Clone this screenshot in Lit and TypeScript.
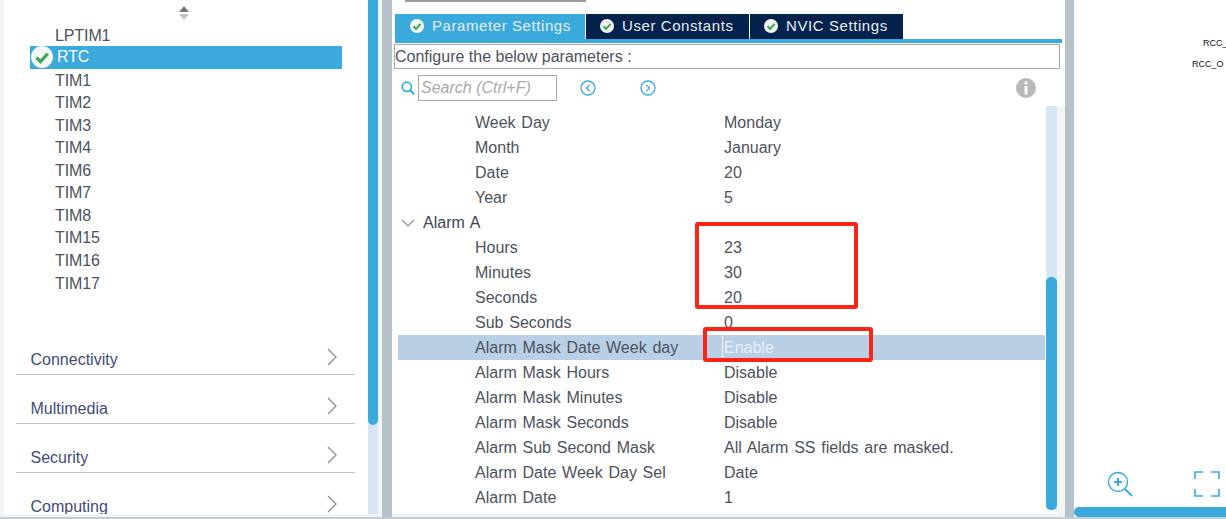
import { LitElement, css, html, svg } from 'lit';
import { customElement } from 'lit/decorators.js';

const PERIPHERALS = ['TIM1', 'TIM2', 'TIM3', 'TIM4', 'TIM6', 'TIM7', 'TIM8', 'TIM15', 'TIM16', 'TIM17'];
const CATEGORIES = ['Connectivity', 'Multimedia', 'Security', 'Computing'];

type Param = { label: string; value?: string; group?: boolean; selected?: boolean };

const PARAMS: Param[] = [
  { label: 'Week Day', value: 'Monday' },
  { label: 'Month', value: 'January' },
  { label: 'Date', value: '20' },
  { label: 'Year', value: '5' },
  { label: 'Alarm A', group: true },
  { label: 'Hours', value: '23' },
  { label: 'Minutes', value: '30' },
  { label: 'Seconds', value: '20' },
  { label: 'Sub Seconds', value: '0' },
  { label: 'Alarm Mask Date Week day', value: 'Enable', selected: true },
  { label: 'Alarm Mask Hours', value: 'Disable' },
  { label: 'Alarm Mask Minutes', value: 'Disable' },
  { label: 'Alarm Mask Seconds', value: 'Disable' },
  { label: 'Alarm Sub Second Mask', value: 'All Alarm SS fields are masked.' },
  { label: 'Alarm Date Week Day Sel', value: 'Date' },
  { label: 'Alarm Date', value: '1' },
];

const TABS = ['Parameter Settings', 'User Constants', 'NVIC Settings'];

const check = (size: number, color: string) => html`<svg width=${size} height=${size} viewBox="0 0 20 20">
  <circle cx="10" cy="10" r="10" fill="#f4f8f5"></circle>
  <path d="M5 10.5l3.6 3.6L15.2 7" fill="none" stroke=${color} stroke-width="3"></path>
</svg>`;

const chevronRight = svg`<path d="M1 1l8 8-8 8" fill="none" stroke="#8a8d92" stroke-width="1.3"></path>`;

@customElement('app-root')
export class AppRoot extends LitElement {
  render() {
    return html`<div class="page">
      <aside class="left">
        <div class="left-content">
          <div class="sort">
            <svg width="12" height="14" viewBox="0 0 12 14">
              <path d="M6 0l5 6H1z" fill="#777"></path>
              <path d="M1 8h10l-5 6z" fill="#c4c4c4"></path>
            </svg>
          </div>
          <div class="list">
            <div class="item">LPTIM1</div>
            <div class="item active"><span class="active-icon">${check(22, '#3fa75c')}</span>RTC</div>
            ${PERIPHERALS.map((name) => html`<div class="item">${name}</div>`)}
          </div>
          <div class="categories">
            ${CATEGORIES.map(
              (name) => html`<div class="category">
                <span>${name}</span>
                <svg width="10" height="18" viewBox="0 0 10 18">${chevronRight}</svg>
              </div>`,
            )}
          </div>
        </div>
        <div class="vbar left-bar"><div class="thumb"></div></div>
      </aside>
      <div class="divider"></div>
      <main class="middle">
        <div class="top-tick"></div>
        <div class="tabs">
          ${TABS.map(
            (name, i) => html`<div class="tab tab-${i} ${i === 0 ? 'on' : ''}">
              ${check(14, '#3fa75c')}<span>${name}</span>
            </div>`,
          )}
        </div>
        <div class="tab-line"></div>
        <div class="config">Configure the below parameters :</div>
        <div class="search-row">
          <svg class="search-icon" width="14" height="14" viewBox="0 0 14 14">
            <circle cx="5.8" cy="5.8" r="4.6" fill="none" stroke="#3aa9dc" stroke-width="1.7"></circle>
            <path d="M9.2 9.2l4 4" stroke="#3aa9dc" stroke-width="2"></path>
          </svg>
          <div class="search">Search (Ctrl+F)</div>
          <svg class="nav prev" width="16" height="16" viewBox="0 0 16 16">
            <circle cx="8" cy="8" r="7" fill="none" stroke="#3aa9dc" stroke-width="1.3"></circle>
            <path d="M9.5 5L6.5 8l3 3" fill="none" stroke="#3aa9dc" stroke-width="1.3"></path>
          </svg>
          <svg class="nav next" width="16" height="16" viewBox="0 0 16 16">
            <circle cx="8" cy="8" r="7" fill="none" stroke="#3aa9dc" stroke-width="1.3"></circle>
            <path d="M6.5 5l3 3-3 3" fill="none" stroke="#3aa9dc" stroke-width="1.3"></path>
          </svg>
          <svg class="info" width="20" height="20" viewBox="0 0 20 20">
            <circle cx="10" cy="10" r="10" fill="#b9b9b9"></circle>
            <rect x="8.6" y="3.5" width="2.8" height="2.8" fill="#fff"></rect>
            <rect x="8.6" y="8" width="2.8" height="8.5" fill="#fff"></rect>
          </svg>
        </div>
        <div class="tree-wrap">
          <div class="tree">
            ${PARAMS.map((p) =>
              p.group
                ? html`<div class="row group">
                    <svg width="14" height="8" viewBox="0 0 14 8">
                      <path d="M1 1l6 6 6-6" fill="none" stroke="#8a8d92" stroke-width="1.2"></path>
                    </svg>
                    <span>${p.label}</span>
                  </div>`
                : html`<div class="row ${p.selected ? 'selected' : ''}">
                    <span class="label">${p.label}</span>
                    <span class="value">${p.value}</span>
                  </div>`,
            )}
          </div>
          <div class="vbar tree-bar"><div class="thumb"></div></div>
          <div class="gutter"></div>
        </div>
      </main>
      <div class="divider right-divider"></div>
      <section class="right">
        <div class="pins">
          <div class="pin first">RCC_</div>
          <div class="pin">RCC_O</div>
        </div>
        <div class="tools">
          <svg width="26" height="26" viewBox="0 0 26 26">
            <circle cx="11" cy="11" r="9.5" fill="none" stroke="#3aa9dc" stroke-width="1.4"></circle>
            <path d="M7 11h8M11 7v8" stroke="#3aa9dc" stroke-width="2"></path>
            <path d="M18 18l7 7" stroke="#3aa9dc" stroke-width="1.8"></path>
          </svg>
          <svg width="26" height="26" viewBox="0 0 26 26">
            <path d="M1 8V1h8M17 1h8v7M25 18v7h-8M9 25H1v-7" fill="none" stroke="#3aa9dc" stroke-width="1.6"></path>
          </svg>
        </div>
        <div class="hbar"></div>
      </section>
      <div class="mark mark-values"></div>
      <div class="mark mark-enable"></div>
    </div>`;
  }

  static styles = css`
    :host {
      display: block;
      font-family: 'Liberation Sans', Arial, sans-serif;
      font-size: 16px;
      color: #4d525c;
    }
    .page {
      position: relative;
      display: flex;
      width: 1226px;
      height: 519px;
      overflow: hidden;
      background: #fff;
      box-sizing: border-box;
      border-bottom: 2px solid #c5cdd2;
    }
    .left {
      width: 382px;
      flex: none;
      display: flex;
      background: #f3f5f5;
      padding-left: 4px;
      box-sizing: border-box;
    }
    .left-content {
      width: 364px;
      height: 514px;
      background: #fff;
      overflow: hidden;
    }
    .sort {
      height: 23.5px;
      padding: 6px 0 0 174px;
      box-sizing: border-box;
    }
    .list {
      padding-left: 26px;
    }
    .item {
      height: 22.55px;
      line-height: 24.5px;
      padding-left: 25px;
      width: 287px;
      letter-spacing: -0.1px;
    }
    .item.active {
      display: flex;
      align-items: center;
      background: #3aa9dc;
      color: #fff;
      padding-left: 1px;
      width: 311px;
    }
    .active-icon {
      display: flex;
      width: 26px;
    }
    .categories {
      margin-top: 31.5px;
      padding-left: 12px;
      width: 339px;
    }
    .category {
      height: 49px;
      box-sizing: border-box;
      border-bottom: 1px solid #b6c2ca;
      display: flex;
      justify-content: space-between;
      align-items: flex-end;
      padding: 0 18px 5px 14.5px;
      color: #3f4b78;
    }
    .category svg {
      margin-bottom: 3px;
    }
    .vbar {
      flex: none;
      width: 10px;
      background: #d6e6f4;
    }
    .thumb {
      background: #3aa9dc;
      border-radius: 5px;
    }
    .left-bar {
      height: 514px;
      margin-right: 4px;
    }
    .left-bar .thumb {
      height: 425px;
      border-radius: 0 0 5px 5px;
    }
    .divider {
      width: 10px;
      flex: none;
      background: #b6c2ca;
    }
    .right-divider {
      width: 9px;
    }
    .middle {
      width: 673px;
      flex: none;
      display: flex;
      flex-direction: column;
      box-sizing: border-box;
      border-bottom: 3px solid #f0f2f3;
    }
    .top-tick {
      width: 181px;
      height: 2px;
      margin: 0 0 12px 13px;
      background: #9a9a9a;
    }
    .tabs {
      display: flex;
      gap: 1px;
      margin-left: 3px;
      height: 25px;
    }
    .tab {
      display: flex;
      align-items: center;
      gap: 8px;
      padding: 0 0 2px 14px;
      background: #04224b;
      color: #e8edf2;
      font-size: 15px;
      letter-spacing: 0.58px;
      box-sizing: border-box;
    }
    .tab.on {
      background: #3aa9dc;
      padding-left: 15px;
    }
    .tab-0 {
      width: 190px;
    }
    .tab-1 {
      width: 163px;
    }
    .tab-2 {
      width: 153px;
    }
    .tab-line {
      height: 4px;
      margin: 0 3px;
      background: #3aa9dc;
    }
    .config {
      height: 25px;
      line-height: 23px;
      margin: 1px 5px 0 2px;
      border: 1px solid #a8a8a8;
      box-sizing: border-box;
      white-space: nowrap;
    }
    .search-row {
      display: flex;
      align-items: center;
      height: 38px;
      padding-left: 9px;
      position: relative;
    }
    .search-icon {
      flex: none;
    }
    .search {
      width: 139px;
      height: 26px;
      line-height: 24px;
      margin-left: 3px;
      box-sizing: border-box;
      border: 1px solid #a8a8a8;
      padding-left: 2px;
      font-style: italic;
      color: #a9a9a9;
      white-space: nowrap;
    }
    .nav.prev {
      margin-left: 23px;
    }
    .nav.next {
      margin-left: 44px;
    }
    .info {
      margin-left: 360px;
    }
    .tree-wrap {
      flex: 1;
      display: flex;
      min-height: 0;
      padding-top: 4px;
    }
    .tree {
      width: 653px;
      margin-top: -1px;
      overflow: hidden;
      word-spacing: 1.3px;
    }
    .row {
      display: flex;
      height: 25px;
      line-height: 25px;
      margin-left: 6px;
      white-space: nowrap;
    }
    .row .label {
      width: 249px;
      padding-left: 77px;
      flex: none;
    }
    .row.group {
      align-items: center;
      gap: 8px;
      padding-left: 3px;
      color: #3f444e;
    }
    .row.selected {
      background: #b8cfe6;
    }
    .row.selected .value {
      color: #e8f0f8;
      border-left: 1px solid #f2f6fa;
      margin-left: -2px;
      padding-left: 1px;
    }
    .tree-bar {
      display: flex;
      flex-direction: column;
      justify-content: flex-end;
      width: 11px;
      height: 404px;
      margin-top: -5px;
      margin-left: 1px;
    }
    .tree-bar .thumb {
      height: 233px;
    }
    .gutter {
      width: 8px;
      background: #f3f5f5;
      margin-top: -5px;
    }
    .right {
      flex: 1;
      display: flex;
      flex-direction: column;
      min-width: 0;
      overflow: hidden;
    }
    .pins {
      height: 471px;
      flex: none;
      padding-top: 37px;
      box-sizing: border-box;
      font-size: 9px;
      line-height: 12px;
      color: #111;
      white-space: nowrap;
    }
    .pin {
      height: 21px;
      padding-left: 118px;
    }
    .pin.first {
      padding-left: 129px;
    }
    .tools {
      display: flex;
      gap: 61px;
      padding-left: 33px;
      height: 26px;
      flex: none;
    }
    .hbar {
      height: 10px;
      flex: none;
      margin-top: 10px;
      background: #3aa9dc;
      border-radius: 5px 0 0 5px;
    }
    .mark {
      position: absolute;
      border: 4px solid #fb2417;
      border-radius: 3px;
      box-sizing: border-box;
    }
    .mark-values {
      left: 695px;
      top: 222px;
      width: 163px;
      height: 87px;
    }
    .mark-enable {
      left: 703px;
      top: 327px;
      width: 170px;
      height: 35px;
    }
  `;
}

declare global {
  interface HTMLElementTagNameMap {
    'app-root': AppRoot;
  }
}
